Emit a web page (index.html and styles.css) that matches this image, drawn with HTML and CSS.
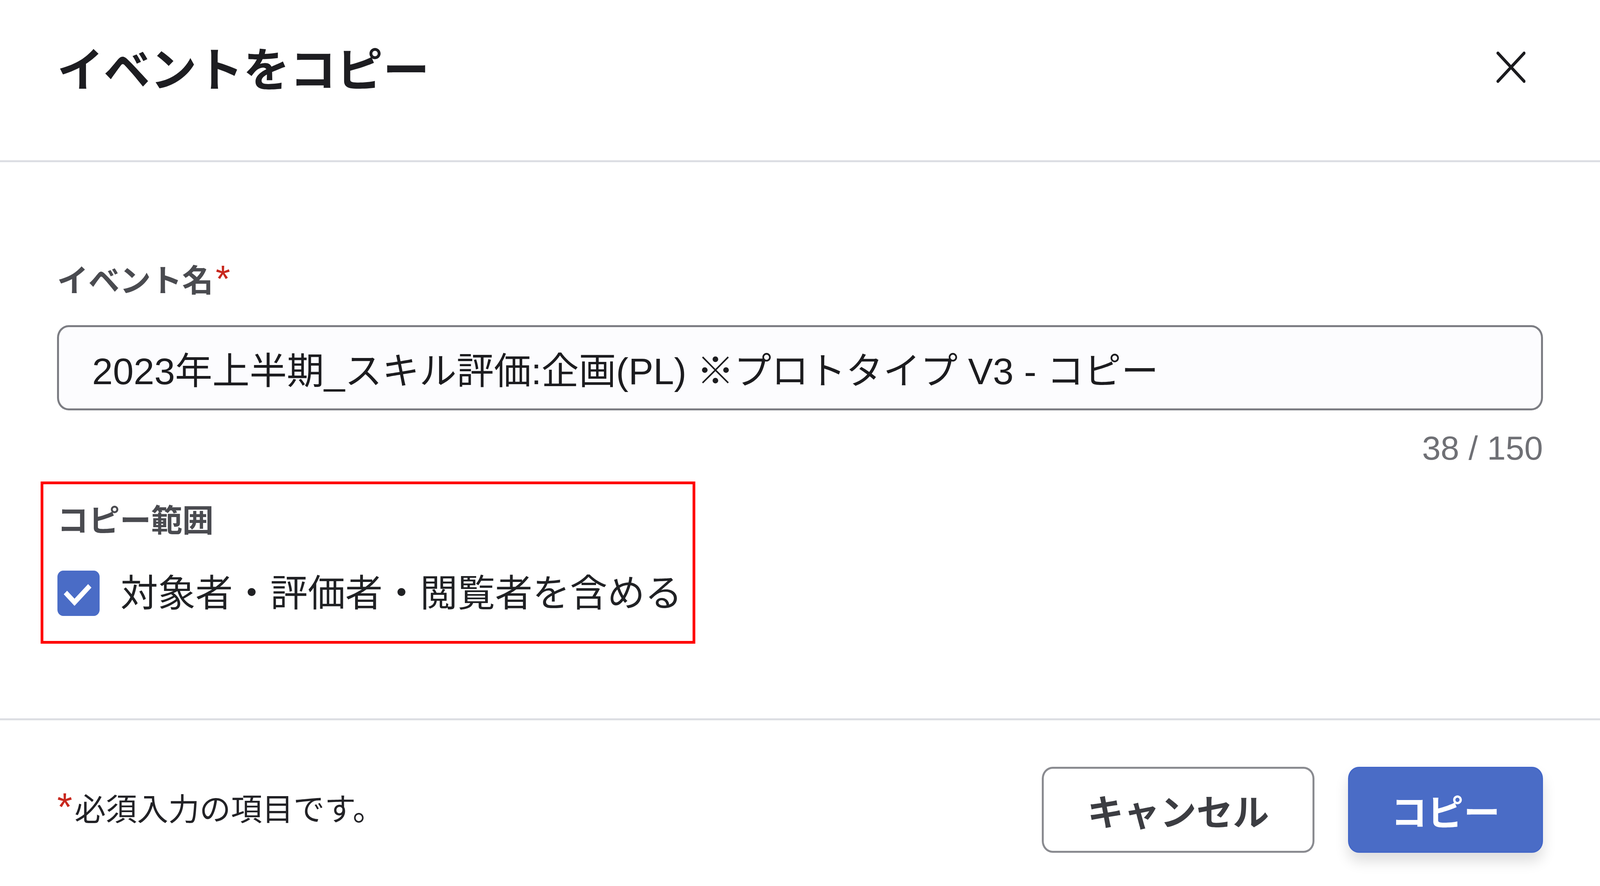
FILE: index.html
```html
<!DOCTYPE html>
<html lang="ja">
<head>
<meta charset="utf-8">
<title>イベントをコピー</title>
<link rel="stylesheet" href="styles.css">
</head>
<body>
<div class="dialog">
  <header class="dialog-header">
    <h1 class="dialog-title">イベントをコピー</h1>
    <button class="close-btn" type="button" aria-label="閉じる">
      <svg viewBox="0 0 80 80" preserveAspectRatio="none"><path d="M4 4 L76 76 M76 4 L4 76" stroke="#1b1b1e" stroke-width="8" stroke-linecap="round" fill="none"/></svg>
    </button>
  </header>
  <main class="dialog-body">
    <label class="field-label" for="event-name">イベント名<span class="req">*</span></label>
    <input class="text-input" id="event-name" type="text" value="2023年上半期_スキル評価:企画(PL) ※プロトタイプ V3 - コピー">
    <div class="counter">38 / 150</div>
    <section class="scope">
      <div class="field-label">コピー範囲</div>
      <label class="check-row">
        <span class="checkbox"><svg viewBox="0 0 116 116" preserveAspectRatio="none"><path d="M22 56 L47 81 L89 39" stroke="#ffffff" stroke-width="13" fill="none" stroke-linejoin="miter"/></svg></span>
        <span class="check-text">対象者・評価者・閲覧者を含める</span>
      </label>
    </section>
  </main>
  <footer class="dialog-footer">
    <p class="note"><span class="req">*</span>必須入力の項目です。</p>
    <div class="actions">
      <button class="btn btn-secondary" type="button">キャンセル</button>
      <button class="btn btn-primary" type="button">コピー</button>
    </div>
  </footer>
</div>
</body>
</html>
```

FILE: styles.css
```css
/* Horizontal unit: 1rem = 10 reference pixels of the 4400px-wide design.
   Vertical sizes are given in px (the page is 2267px tall). */
html {
  font-size: calc(100vw / 440);
  overflow: hidden;
}

html, body {
  margin: 0;
  padding: 0;
  background: #ffffff;
}

body {
  font-family: "Liberation Sans", "Noto Sans CJK JP", sans-serif;
  color: #1f1f23;
}

.dialog {
  width: 100%;
  height: 2267px;
  display: flex;
  flex-direction: column;
  background: #ffffff;
}

.dialog-header {
  box-sizing: border-box;
  height: 415px;
  padding: 0 15.7rem 48px 15.7rem;
  border-bottom: 5px solid #dcdee3;
  display: flex;
  align-items: center;
  justify-content: space-between;
  flex: none;
}

.dialog-title {
  margin: 0;
  font-size: 12.8rem;
  line-height: 150px;
  font-weight: 700;
  color: #1d1d21;
}

.close-btn {
  width: 8rem;
  height: 80px;
  padding: 0;
  margin: 0 4.8rem 18px 0;
  border: none;
  background: transparent;
  display: flex;
}

.close-btn svg {
  width: 100%;
  height: 100%;
}

.dialog-body {
  box-sizing: border-box;
  height: 1423px;
  padding: 244px 15.7rem 0 15.7rem;
  flex: none;
}

.field-label {
  display: block;
  font-size: 8.6rem;
  line-height: 120px;
  font-weight: 700;
  color: #4a4b50;
}

.req {
  color: #c8281e;
  font-size: 1.2em;
  line-height: 0;
  font-weight: 400;
  margin-left: 0.6rem;
}

.note .req {
  font-size: 1.25em;
  margin-left: 0;
  margin-right: 0.6rem;
}

.text-input {
  display: block;
  box-sizing: border-box;
  width: 100%;
  height: 218px;
  margin: 53px 0 0 0;
  padding: 0 9.1rem;
  border: 5px solid #7c7d83;
  border-radius: 3.2rem / 32px;
  background: #fcfcfe;
  font-family: inherit;
  font-size: 10.25rem;
  font-weight: 400;
  color: #1c1c1f;
  outline: none;
}

.counter {
  margin-top: 41px;
  text-align: right;
  font-size: 9.2rem;
  line-height: 110px;
  color: #6f7075;
}

.scope {
  box-sizing: border-box;
  width: 180rem;
  margin: 31px 0 0 -4.5rem;
  padding: 34px 0 62px 3.8rem;
  border: 7px solid #ff0000;
}

.check-row {
  display: flex;
  align-items: center;
  gap: 5.8rem;
  height: 120px;
  margin-top: 65px;
}

.checkbox {
  width: 11.6rem;
  height: 116px;
  border-radius: 1.6rem / 16px;
  background: #4a6cc6;
  display: flex;
  overflow: hidden;
  flex: none;
}

.checkbox svg {
  width: 100%;
  height: 100%;
}

.check-text {
  font-size: 10.3rem;
  line-height: 120px;
  color: #202124;
  white-space: nowrap;
}

.dialog-footer {
  box-sizing: border-box;
  border-top: 5px solid #dcdee3;
  padding: 119px 15.7rem 85px 15.7rem;
  display: flex;
  align-items: center;
  justify-content: space-between;
  flex: none;
}

.note {
  margin: 0;
  font-size: 8.6rem;
  line-height: 120px;
  color: #222226;
}

.actions {
  display: flex;
  gap: 9.2rem;
}

.btn {
  box-sizing: border-box;
  height: 220px;
  padding: 0;
  border-radius: 3rem / 30px;
  font-family: inherit;
  font-size: 10rem;
  font-weight: 700;
  display: flex;
  align-items: center;
  justify-content: center;
}

.btn-secondary {
  width: 75rem;
  background: #ffffff;
  border: 5px solid #8a8b90;
  color: #3c3d42;
}

.btn-primary {
  width: 53.6rem;
  background: #4a6cc6;
  border: 3px solid #4266c8;
  color: #ffffff;
  box-shadow: 0 22px 34px rgba(0, 0, 0, 0.13);
}
```
